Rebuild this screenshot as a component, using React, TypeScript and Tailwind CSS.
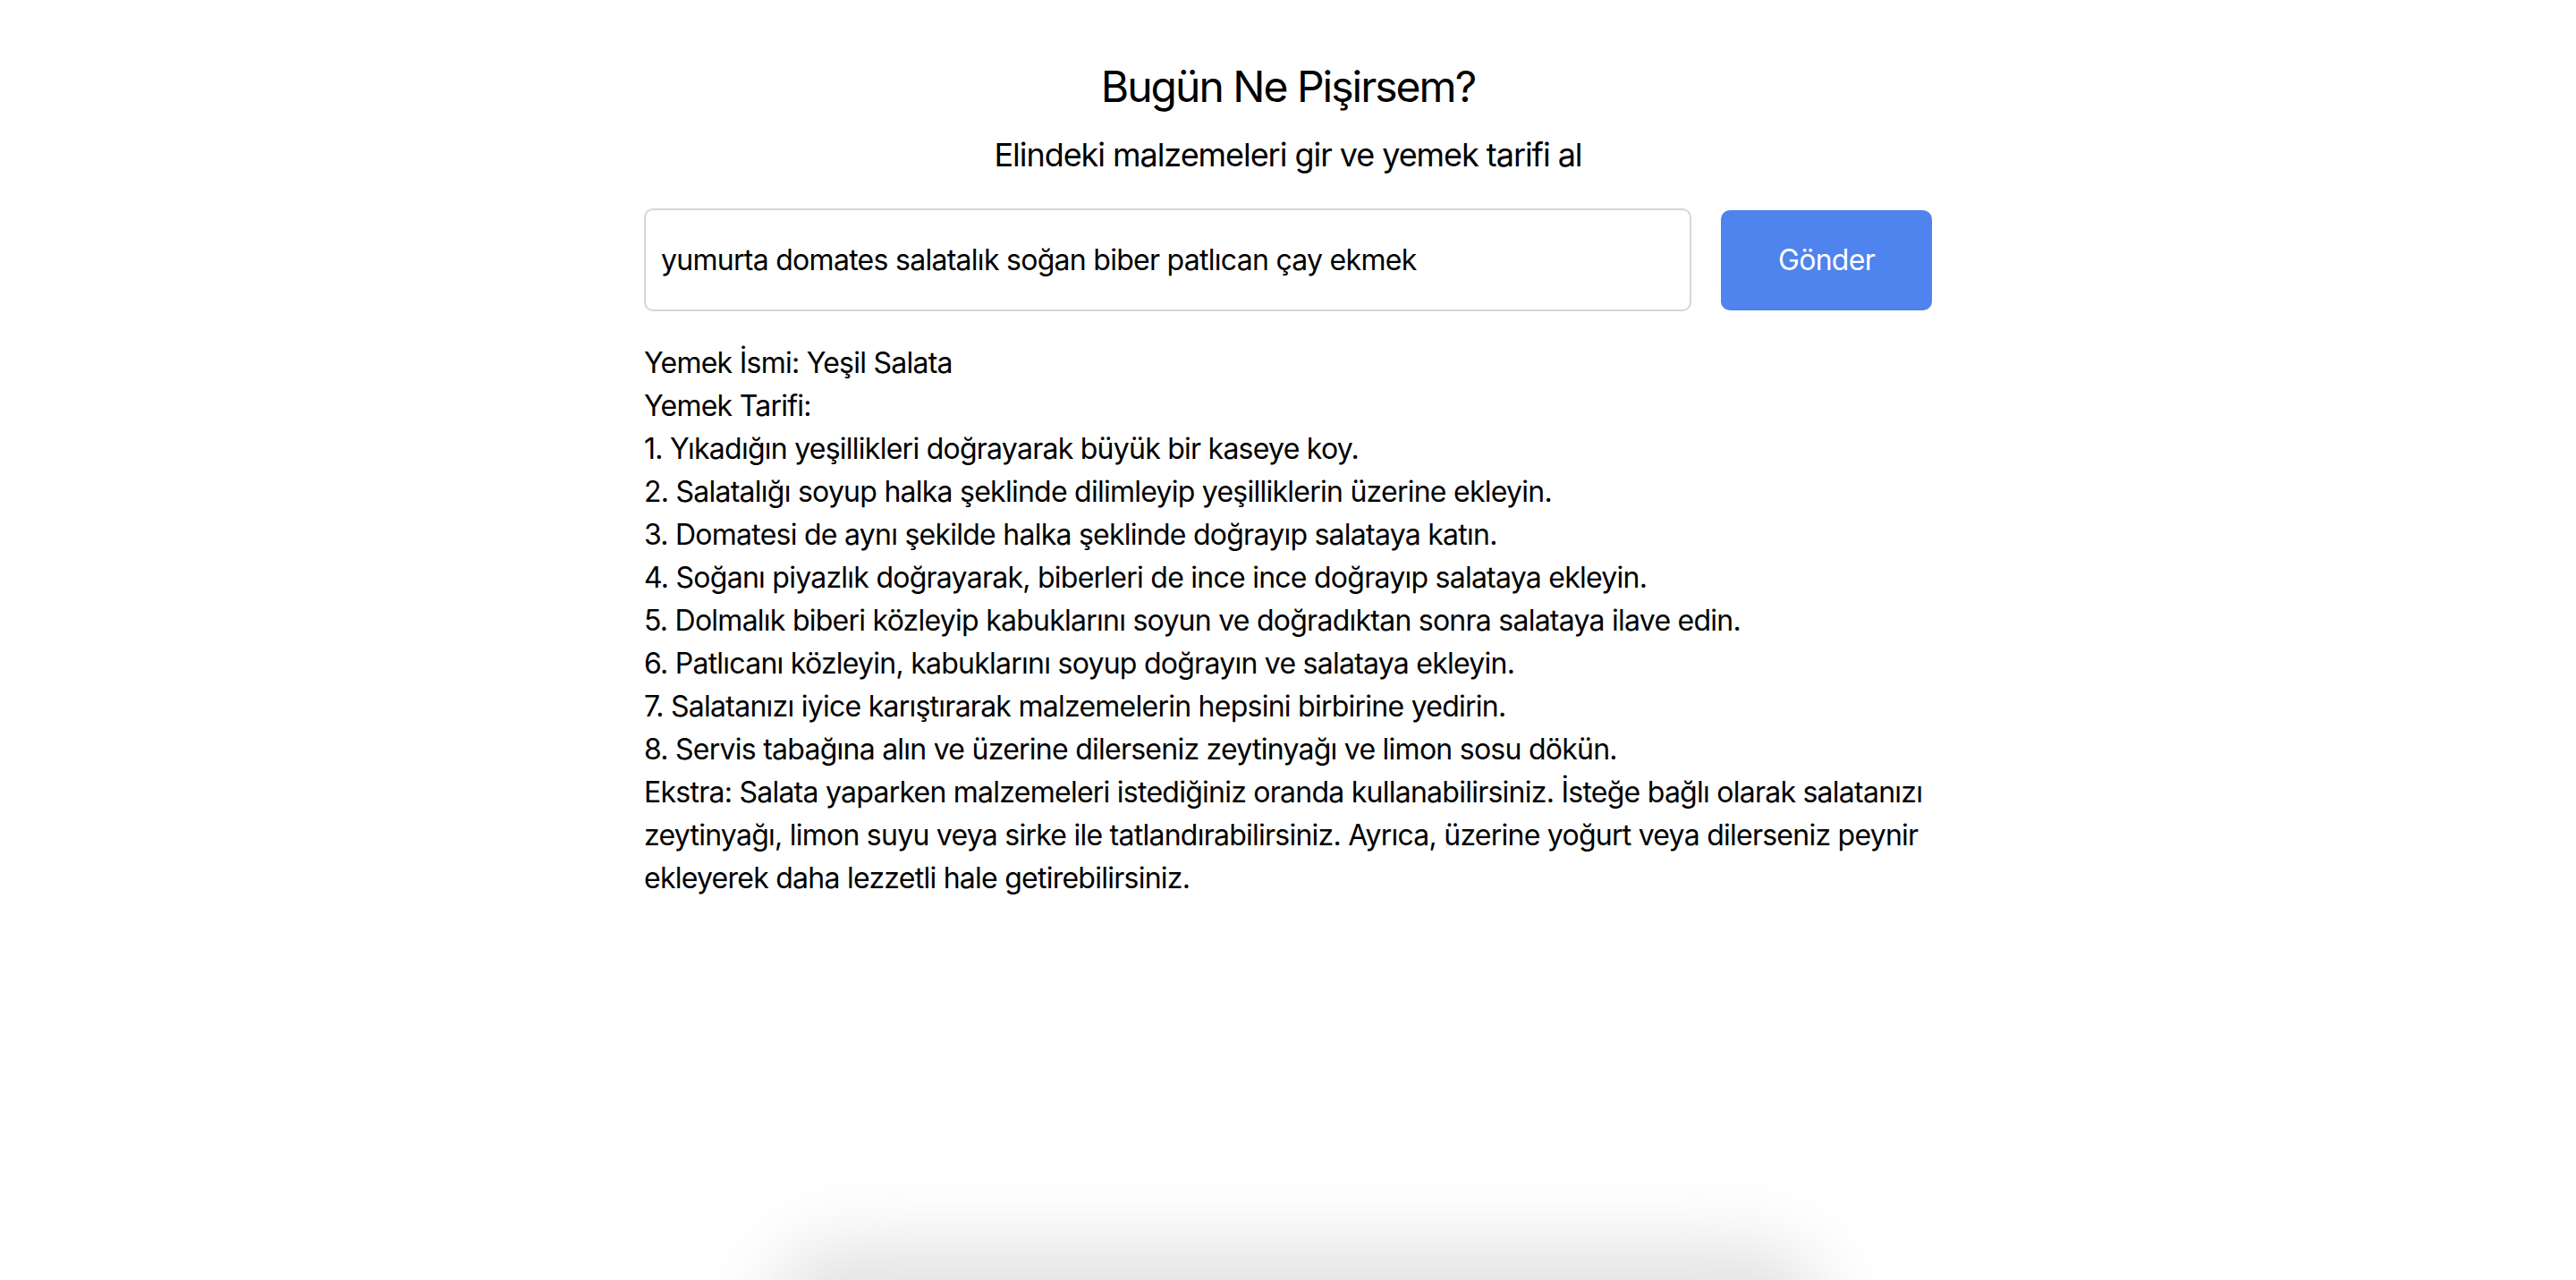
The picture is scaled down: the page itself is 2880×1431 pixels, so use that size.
import { useState } from 'react';

const steps = [
    '1. Yıkadığın yeşillikleri doğrayarak büyük bir kaseye koy.',
    '2. Salatalığı soyup halka şeklinde dilimleyip yeşilliklerin üzerine ekleyin.',
    '3. Domatesi de aynı şekilde halka şeklinde doğrayıp salataya katın.',
    '4. Soğanı piyazlık doğrayarak, biberleri de ince ince doğrayıp salataya ekleyin.',
    '5. Dolmalık biberi közleyip kabuklarını soyun ve doğradıktan sonra salataya ilave edin.',
    '6. Patlıcanı közleyin, kabuklarını soyup doğrayın ve salataya ekleyin.',
    '7. Salatanızı iyice karıştırarak malzemelerin hepsini birbirine yedirin.',
    '8. Servis tabağına alın ve üzerine dilerseniz zeytinyağı ve limon sosu dökün.',
]

export default function App(){
    const [text, setText] = useState('yumurta domates salatalık soğan biber patlıcan çay ekmek')

    return (
        <div className="relative min-h-screen w-full overflow-hidden bg-white text-black font-['Inter',sans-serif]">
            <div className="mx-auto w-[1440px] pt-[65px]">
                <h1 className="text-center text-[48px] leading-[64px] font-normal tracking-[-2px]">Bugün Ne Pişirsem?</h1>
                <p className="mt-[20px] text-center text-[36px] leading-[48px] tracking-[-1.05px]">Elindeki malzemeleri gir ve yemek tarifi al</p>

                <form className="mt-[36px] flex items-center gap-[33px]" onSubmit={(e) => e.preventDefault()}>
                    <input
                        type="text"
                        value={text}
                        onChange={(e) => setText(e.target.value)}
                        className="h-[115px] flex-1 rounded-[10px] border-2 border-[#d4d6da] px-[17px] text-[32px] tracking-[-0.72px] text-black focus:outline-none"
                    />
                    <button type="submit" className="h-[112px] w-[236px] rounded-[10px] bg-[#4f83ee] text-[32px] tracking-[-0.72px] text-white">
                        Gönder
                    </button>
                </form>

                <div className="mt-[34px] text-[32px] leading-[48px] tracking-[-0.75px]">
                    <p>Yemek İsmi: Yeşil Salata</p>
                    <p>Yemek Tarifi:</p>
                    {steps.map((s) => (
                        <p key={s}>{s}</p>
                    ))}
                    <p>Ekstra: Salata yaparken malzemeleri istediğiniz oranda kullanabilirsiniz. İsteğe bağlı olarak salatanızı zeytinyağı, limon suyu veya sirke ile tatlandırabilirsiniz. Ayrıca, üzerine yoğurt veya dilerseniz peynir ekleyerek daha lezzetli hale getirebilirsiniz.</p>
                </div>
            </div>

            <div className="pointer-events-none absolute bottom-[-160px] left-[860px] h-[200px] w-[1180px] rounded-[80px] bg-[#e2e2e2] blur-[40px]" />
        </div>
    )
}
